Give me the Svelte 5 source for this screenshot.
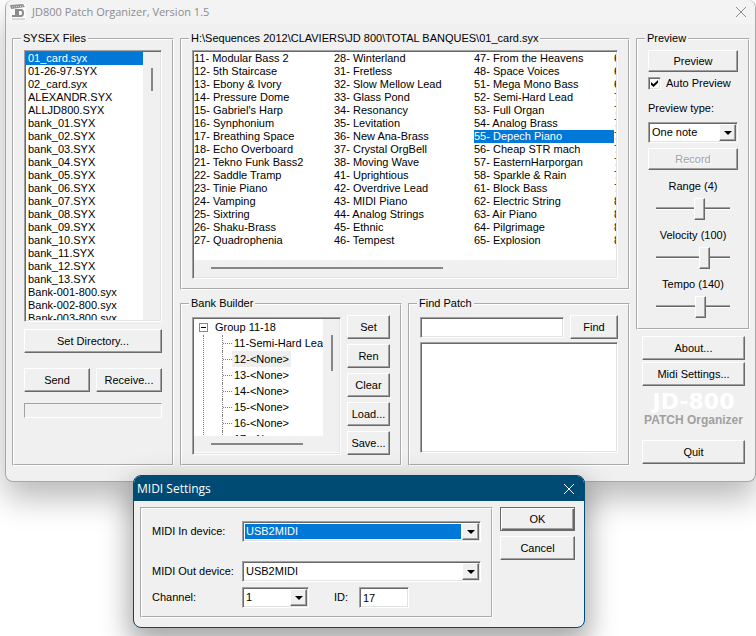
<script>
  const files = [
    "01_card.syx",
    "01-26-97.SYX",
    "02_card.syx",
    "ALEXANDR.SYX",
    "ALLJD800.SYX",
    "bank_01.SYX",
    "bank_02.SYX",
    "bank_03.SYX",
    "bank_04.SYX",
    "bank_05.SYX",
    "bank_06.SYX",
    "bank_07.SYX",
    "bank_08.SYX",
    "bank_09.SYX",
    "bank_10.SYX",
    "bank_11.SYX",
    "bank_12.SYX",
    "bank_13.SYX",
    "Bank-001-800.syx",
    "Bank-002-800.syx",
    "Bank-003-800.syx"
  ];

  const patches = [
    "11- Modular Bass 2",
    "12- 5th Staircase",
    "13- Ebony & Ivory",
    "14- Pressure Dome",
    "15- Gabriel's Harp",
    "16- Synphonium",
    "17- Breathing Space",
    "18- Echo Overboard",
    "21- Tekno Funk Bass2",
    "22- Saddle Tramp",
    "23- Tinie Piano",
    "24- Vamping",
    "25- Sixtring",
    "26- Shaku-Brass",
    "27- Quadrophenia",
    "28- Winterland",
    "31- Fretless",
    "32- Slow Mellow Lead",
    "33- Glass Pond",
    "34- Resonancy",
    "35- Levitation",
    "36- New Ana-Brass",
    "37- Crystal OrgBell",
    "38- Moving Wave",
    "41- Uprightious",
    "42- Overdrive Lead",
    "43- MIDI Piano",
    "44- Analog Strings",
    "45- Ethnic",
    "46- Tempest",
    "47- From the Heavens",
    "48- Space Voices",
    "51- Mega Mono Bass",
    "52- Semi-Hard Lead",
    "53- Full Organ",
    "54- Analog Brass",
    "55- Depech Piano",
    "56- Cheap STR mach",
    "57- EasternHarporgan",
    "58- Sparkle & Rain",
    "61- Block Bass",
    "62- Electric String",
    "63- Air Piano",
    "64- Pilgrimage",
    "65- Explosion",
    "66-",
    "67-",
    "68-",
    "71-",
    "72-",
    "73-",
    "74-",
    "75-",
    "76-",
    "77-",
    "78-",
    "81-",
    "82-",
    "83-",
    "84-"
  ];

  const slots = [
    "11-Semi-Hard Lead",
    "12-<None>",
    "13-<None>",
    "14-<None>",
    "15-<None>",
    "16-<None>",
    "17-<None>"
  ];

  const builderActions = ["Set", "Ren", "Clear", "Load...", "Save..."];

  let selectedFile = $state("01_card.syx");
  let selectedPatch = $state("55- Depech Piano");
  let selectedSlot = $state("12-<None>");
  let autoPreview = $state(true);
  let range = $state(4);
  let velocity = $state(100);
  let tempo = $state(140);
  let midiId = $state("17");
  let search = $state("");
  let showMidi = $state(true);
</script>

<main class="window">
  <header class="titlebar">
    <svg class="app-icon" viewBox="0 0 16 16" aria-hidden="true">
      <path d="M0 0 H16 V16 H0 Z" fill="#fcfcfc" />
      <path d="M0 1 L13 0 L15 3 L1 5 Z" fill="#8c8c8c" />
      <path d="M2 3 L13 2" stroke="#e4e4e4" stroke-dasharray="1 1" />
      <path d="M6 5 V12 H2 M8 6 H11 Q13 6 13 9 Q13 12 11 12 H8 Z" fill="none" stroke="#8c8c8c" stroke-width="2" />
      <path d="M2 15 H15" stroke="#b4b4b4" />
    </svg>
    <h1>JD800 Patch Organizer, Version 1.5</h1>
    <button class="close" aria-label="Close">
      <svg viewBox="0 0 10 10"><path d="M0 0 L10 10 M10 0 L0 10" /></svg>
    </button>
  </header>

  <div class="content">
    <fieldset class="files">
      <legend>SYSEX Files</legend>
      <div class="sunken file-box">
        <ul class="file-list" role="listbox" aria-label="SYSEX Files">
          {#each files as file}
            <li role="option" aria-selected={file === selectedFile}>{file}</li>
          {/each}
        </ul>
        <div class="vscroll"><span class="thumb"></span></div>
      </div>
      <button class="btn">Set Directory...</button>
      <div class="transfer">
        <button class="btn">Send</button>
        <button class="btn">Receive...</button>
      </div>
      <div class="progress" role="progressbar" aria-label="Transfer" aria-valuenow="0"></div>
    </fieldset>

    <div class="middle">
      <fieldset class="bank">
        <legend>H:\Sequences 2012\CLAVIERS\JD 800\TOTAL BANQUES\01_card.syx</legend>
        <div class="sunken patch-box">
          <ul class="patch-list" role="listbox" aria-label="Patches">
            {#each patches as patch}
              <li role="option" aria-selected={patch === selectedPatch}>{patch}</li>
            {/each}
          </ul>
          <div class="hscroll"><span class="thumb wide"></span></div>
        </div>
      </fieldset>

      <fieldset>
        <legend>Bank Builder</legend>
        <div class="builder">
          <div class="sunken tree-box">
            <div class="tree-view">
              <div class="tree-root"><span class="toggle"></span>Group 11-18</div>
              <ul class="tree">
                {#each slots as slot}
                  <li><span class:current={slot === selectedSlot}>{slot}</span></li>
                {/each}
              </ul>
            </div>
            <div class="vscroll"><span class="thumb tall"></span></div>
            <div class="hscroll"><span class="thumb"></span></div>
          </div>
          <div class="actions">
            {#each builderActions as action}
              <button class="btn">{action}</button>
            {/each}
          </div>
        </div>
      </fieldset>

      <fieldset>
        <legend>Find Patch</legend>
        <div class="find">
          <input class="sunken field" type="text" aria-label="Find Patch" bind:value={search} />
          <button class="btn">Find</button>
        </div>
        <ul class="sunken results" aria-label="Results"></ul>
      </fieldset>
    </div>

    <aside>
      <fieldset class="preview">
        <legend>Preview</legend>
        <button class="btn short">Preview</button>
        <label class="check">
          <input type="checkbox" bind:checked={autoPreview} />
          Auto Preview
        </label>
        <label class="type-label" for="preview-type">Preview type:</label>
        <div class="sunken combo">
          <select id="preview-type">
            <option>One note</option>
          </select>
          <span class="arrow"></span>
        </div>
        <button class="btn short record" disabled>Record</button>
        <label class="slider">
          Range ({range})
          <input type="range" min="1" max="6" bind:value={range} />
        </label>
        <label class="slider">
          Velocity ({velocity})
          <input type="range" min="40" max="127" bind:value={velocity} />
        </label>
        <label class="slider">
          Tempo ({tempo})
          <input type="range" min="40" max="200" bind:value={tempo} />
        </label>
      </fieldset>

      <div class="side">
        <button class="btn">About...</button>
        <button class="btn" onclick={() => (showMidi = true)}>Midi Settings...</button>
        <div class="logo">
          <strong>JD-800</strong>
          <span>PATCH Organizer</span>
        </div>
        <button class="btn">Quit</button>
      </div>
    </aside>
  </div>
</main>

{#if showMidi}
  <div class="dialog" role="dialog" aria-labelledby="midi-title">
    <header>
      <h2 id="midi-title">MIDI Settings</h2>
      <button class="close" aria-label="Close" onclick={() => (showMidi = false)}>
        <svg viewBox="0 0 10 10"><path d="M0 0 L10 10 M10 0 L0 10" /></svg>
      </button>
    </header>
    <div class="dialog-body">
      <div class="group">
        <label class="input-device" for="midi-in">MIDI In device:</label>
        <div class="sunken combo input-device focused">
          <select id="midi-in">
            <option>USB2MIDI</option>
          </select>
          <span class="arrow"></span>
        </div>
        <label for="midi-out">MIDI Out device:</label>
        <div class="sunken combo">
          <select id="midi-out">
            <option>USB2MIDI</option>
          </select>
          <span class="arrow"></span>
        </div>
        <label for="channel">Channel:</label>
        <div class="channel-row">
          <div class="sunken combo">
            <select id="channel">
              <option>1</option>
            </select>
            <span class="arrow"></span>
          </div>
          <label for="midi-id">ID:</label>
          <input id="midi-id" class="sunken field" type="text" bind:value={midiId} />
        </div>
      </div>
      <div class="dialog-buttons">
        <button class="btn default" onclick={() => (showMidi = false)}>OK</button>
        <button class="btn" onclick={() => (showMidi = false)}>Cancel</button>
      </div>
    </div>
  </div>
{/if}

<style>
  :global(body) {
    margin: 0;
    min-height: 100vh;
    background: #fff;
  }

  :global(#app) {
    font: 11px/13px "Liberation Sans", Arial, sans-serif;
    color: #000;
  }

  * {
    box-sizing: border-box;
  }

  button,
  input,
  select {
    font: inherit;
    color: inherit;
    margin: 0;
  }

  ul {
    list-style: none;
    margin: 0;
    padding: 0;
  }

  .window {
    margin-left: 5px;
    background: #f0f0f0;
    border: 1px solid #a8a8a8;
    border-top: 0;
    border-radius: 8px;
    box-shadow: 0 16px 32px rgba(0, 0, 0, 0.28);
  }

  .titlebar {
    display: flex;
    align-items: center;
    gap: 6px;
    height: 24px;
    padding: 0 9px 0 4px;
    background: #f3f3f3;
    border-radius: 8px 8px 0 0;
    color: #8c8c8c;
  }

  h1,
  h2 {
    flex: 1;
    margin: 0;
    font: 12px/16px "Open Sans", "Noto Sans", sans-serif;
  }

  h1 {
    font-size: 11px;
  }

  .app-icon {
    width: 16px;
    height: 16px;
  }

  .close {
    display: flex;
    padding: 0;
    border: 0;
    background: none;
  }

  .close svg {
    width: 10px;
    height: 10px;
    overflow: visible;
    fill: none;
    stroke: currentColor;
  }

  .content {
    display: grid;
    grid-template-columns: 162px 1fr 114px;
    gap: 6px;
    padding: 8px 5px 15px 6px;
  }

  fieldset {
    min-width: 0;
    margin: 0;
    padding: 5px 10px 9px;
    border: 2px groove #fff;
  }

  legend {
    margin-left: -3px;
    padding: 0 2px;
    white-space: nowrap;
  }

  .sunken {
    padding: 1px;
    background: #fff;
    border: 1px solid;
    border-color: #a0a0a0 #fff #fff #a0a0a0;
    border-radius: 0;
    box-shadow: inset 1px 1px #696969, inset -1px -1px #e3e3e3;
  }

  .btn {
    height: 24px;
    padding: 0;
    background: #f0f0f0;
    border: 1px solid;
    border-color: #fff #696969 #696969 #fff;
    box-shadow: inset -1px -1px #a0a0a0;
  }

  .btn.short {
    height: 22px;
  }

  .btn:disabled {
    color: #a0a0a0;
    text-shadow: 1px 1px #fff;
  }

  .btn.default {
    border-color: #696969;
    box-shadow: inset 1px 1px #fff, inset -1px -1px #696969, inset -2px -2px #a0a0a0;
  }

  .vscroll,
  .hscroll {
    background: #f0f0f0;
  }

  .thumb {
    display: block;
    background: #868686;
  }

  .vscroll .thumb {
    width: 2px;
    height: 23px;
    margin: 16px 0 0 8px;
  }

  .vscroll .thumb.tall {
    height: 36px;
  }

  .hscroll .thumb {
    width: 92px;
    height: 2px;
    margin: 7px 0 0 17px;
  }

  .hscroll .thumb.wide {
    width: 55%;
  }

  [aria-selected="true"] {
    background: #0078d7;
    color: #fff;
  }

  /* SYSEX files */
  .files .btn {
    width: 100%;
  }

  .file-box {
    display: grid;
    grid-template-columns: 1fr 17px;
    height: 272px;
    margin-bottom: 7px;
  }

  .file-list {
    overflow: hidden;
  }

  .file-list li {
    height: 13px;
    padding-left: 2px;
  }

  .transfer {
    display: grid;
    grid-template-columns: 1fr 1fr;
    gap: 6px;
    margin: 15px 0 11px;
  }

  .progress {
    height: 15px;
    border: 1px solid;
    border-color: #a0a0a0 #fff #fff #a0a0a0;
  }

  /* middle column */
  .middle {
    display: grid;
    grid-template-columns: 1fr 1fr;
    grid-template-rows: auto 1fr;
    gap: 7px 6px;
    min-width: 0;
  }

  .bank {
    grid-column: 1 / -1;
  }

  .patch-box {
    display: grid;
    grid-template-rows: 208px 17px;
  }

  .patch-list {
    display: grid;
    grid-template-rows: repeat(15, 13px);
    grid-auto-flow: column;
    grid-auto-columns: 140px;
    overflow: hidden;
    white-space: nowrap;
  }

  .builder {
    display: grid;
    grid-template-columns: 1fr 43px;
    gap: 6px;
  }

  .tree-box {
    display: grid;
    grid-template: 117px 16px / 1fr 16px;
    margin-top: 2px;
  }

  .tree-box .hscroll {
    grid-column: 1 / -1;
  }

  .tree-view {
    overflow: hidden;
    line-height: 16px;
    white-space: nowrap;
  }

  .tree-root {
    display: flex;
    align-items: center;
    padding-left: 5px;
  }

  .toggle {
    display: flex;
    align-items: center;
    justify-content: center;
    width: 9px;
    height: 9px;
    margin-right: 7px;
    border: 1px solid #868686;
  }

  .toggle::before {
    content: "";
    width: 5px;
    height: 1px;
    background: #000;
  }

  .tree {
    margin-left: 9px;
    padding-left: 18px;
    border-left: 1px dotted #808080;
  }

  .tree li {
    display: flex;
    align-items: center;
    height: 16px;
    border-left: 1px dotted #808080;
  }

  .tree li::before {
    content: "";
    flex: none;
    width: 9px;
    border-top: 1px dotted #808080;
  }

  .tree span {
    padding: 0 2px;
  }

  .current {
    background: #eee;
  }

  .actions {
    display: grid;
    gap: 5px;
    align-content: start;
  }

  .field {
    min-width: 0;
    height: 21px;
    padding: 1px 3px;
    outline: none;
  }

  .find {
    display: grid;
    grid-template-columns: 1fr 48px;
    align-items: center;
    gap: 6px;
    margin-bottom: 3px;
  }

  .results {
    height: 111px;
  }

  /* preview column */
  .preview {
    display: flex;
    flex-direction: column;
    padding-bottom: 5px;
  }

  .preview .btn {
    width: 100%;
  }

  .check {
    display: flex;
    align-items: center;
    gap: 5px;
    margin: 5px 0 12px;
    white-space: nowrap;
  }

  .check input {
    appearance: none;
    display: grid;
    place-items: center;
    width: 13px;
    height: 13px;
    background: #fff;
    border: 1px solid;
    border-color: #a0a0a0 #fff #fff #a0a0a0;
    box-shadow: inset 1px 1px #696969, inset -1px -1px #e3e3e3;
  }

  .check input:checked::before {
    content: "";
    width: 7px;
    height: 7px;
    background: #000;
    clip-path: polygon(0 30%, 36% 62%, 100% 0, 100% 40%, 36% 100%, 0 68%);
  }

  .type-label {
    margin-bottom: 7px;
  }

  .combo {
    display: grid;
    height: 21px;
  }

  .combo select,
  .arrow {
    grid-area: 1 / 1;
  }

  .combo select {
    appearance: none;
    min-width: 0;
    padding: 0 18px 0 2px;
    background: none;
    border: 0;
    border-radius: 0;
    outline: none;
  }

  .arrow {
    display: grid;
    place-items: center;
    justify-self: end;
    width: 17px;
    background: #f0f0f0;
    border: 1px solid;
    border-color: #fff #696969 #696969 #fff;
    box-shadow: inset -1px -1px #a0a0a0;
    pointer-events: none;
  }

  .arrow::before {
    content: "";
    border: 4px solid transparent;
    border-top-color: #000;
    border-bottom: 0;
  }

  .record {
    margin: 5px 0 6px;
  }

  .slider {
    display: flex;
    flex-direction: column;
    align-items: center;
    gap: 4px;
    padding: 4px 0 6px;
  }

  .slider input {
    appearance: none;
    width: 74px;
    height: 22px;
    background: none;
  }

  .slider input::-webkit-slider-runnable-track {
    height: 3px;
    background: #696969;
    border-top: 1px solid #a0a0a0;
    border-bottom: 1px solid #fff;
  }

  .slider input::-webkit-slider-thumb {
    appearance: none;
    width: 11px;
    height: 22px;
    margin-top: -10px;
    background: #f0f0f0;
    border: 1px solid;
    border-color: #fff #696969 #696969 #fff;
    box-shadow: inset -1px -1px #a0a0a0;
  }

  .side {
    display: grid;
    gap: 2px;
    padding: 6px 5px 0 6px;
  }

  .logo {
    display: grid;
    justify-items: center;
    margin: 3px 0 10px;
    white-space: nowrap;
  }

  .logo strong {
    color: #fff;
    font: bold 22px/22px "DejaVu Sans", sans-serif;
  }

  .logo span {
    color: #a0a0a0;
    font-size: 12px;
    font-weight: bold;
    line-height: 15px;
  }

  /* MIDI dialog floats over the main window */
  .dialog {
    position: absolute;
    top: 475px;
    left: 133px;
    width: 452px;
    overflow: hidden;
    background: #f0f0f0;
    border: 1px solid #004b74;
    border-radius: 8px;
    box-shadow: 0 12px 28px 4px rgba(0, 0, 0, 0.35);
  }

  .dialog header {
    display: flex;
    align-items: center;
    height: 25px;
    padding: 0 10px 0 3px;
    background: #004b74;
    color: #fff;
  }

  .dialog-body {
    display: grid;
    grid-template-columns: 1fr 75px;
    gap: 7px;
    padding: 6px 9px 9px 6px;
  }

  .group {
    display: grid;
    grid-template-columns: 90px 1fr;
    align-items: center;
    row-gap: 5px;
    padding: 12px 10px 8px;
    border: 2px groove #fff;
  }

  .group label {
    white-space: nowrap;
  }

  .input-device {
    margin-bottom: 14px;
  }

  .focused select {
    margin: 1px 18px 1px 1px;
    padding: 0 0 0 1px;
    background: #0078d7;
    color: #fff;
  }

  .channel-row {
    display: grid;
    grid-template-columns: 67px 50px 50px;
    align-items: center;
  }

  .channel-row label {
    padding-left: 25px;
  }

  .dialog-buttons {
    display: grid;
    gap: 5px;
    align-content: start;
  }
</style>
